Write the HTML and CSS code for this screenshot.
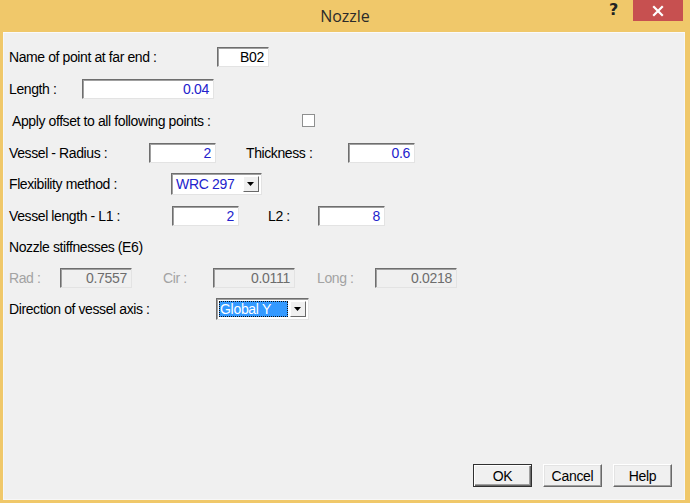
FILE: index.html
```html
<!DOCTYPE html>
<html>
<head>
<meta charset="utf-8">
<link rel="stylesheet" href="styles.css">
</head>
<body>
<div class="window">
  <div class="titlebar">
    <div class="title">Nozzle</div>
    <div class="help-q">?</div>
    <div class="close">
      <svg width="12" height="12" viewBox="0 0 12 12"><path d="M2 2 L10 10 M10 2 L2 10" stroke="#fff" stroke-width="2.2" stroke-linecap="square"/></svg>
    </div>
  </div>
  <div class="client">
    <div class="row r32">
      <span class="lbl" style="width:208px">Name of point at far end :</span>
      <span class="field black" style="width:52px">B02</span>
    </div>
    <div class="row r32">
      <span class="lbl" style="width:73px">Length :</span>
      <span class="field" style="width:132px">0.04</span>
    </div>
    <div class="row r32">
      <span class="lbl indent" style="width:293px">Apply offset to all following points :</span>
      <span class="check"></span>
    </div>
    <div class="row r31">
      <span class="lbl" style="width:140px">Vessel - Radius :</span>
      <span class="field" style="width:67px">2</span>
      <span class="lbl" style="width:102px;margin-left:30px">Thickness :</span>
      <span class="field" style="width:67px">0.6</span>
    </div>
    <div class="row r32">
      <span class="lbl" style="width:162px">Flexibility method :</span>
      <span class="combo" style="width:91px">
        <span class="combo-text blue">WRC 297</span>
        <span class="combo-btn"><svg width="8" height="5" viewBox="0 0 8 5"><path d="M0 0 H7 L3.5 4 Z" fill="#000"/></svg></span>
      </span>
    </div>
    <div class="row r31">
      <span class="lbl" style="width:163px">Vessel length - L1 :</span>
      <span class="field" style="width:67px">2</span>
      <span class="lbl" style="width:50px;margin-left:29px">L2 :</span>
      <span class="field" style="width:67px">8</span>
    </div>
    <div class="row r31">
      <span class="lbl">Nozzle stiffnesses (E6)</span>
    </div>
    <div class="row r31">
      <span class="lbl dis" style="width:51px">Rad :</span>
      <span class="field disf" style="width:72px">0.7557</span>
      <span class="lbl dis" style="width:50px;margin-left:31px">Cir :</span>
      <span class="field disf" style="width:82px">0.0111</span>
      <span class="lbl dis" style="width:58px;margin-left:22px">Long :</span>
      <span class="field disf" style="width:82px">0.0218</span>
    </div>
    <div class="row r32">
      <span class="lbl" style="width:207px">Direction of vessel axis :</span>
      <span class="combo" style="width:93px">
        <span class="combo-text sel"><span class="selbox">Global Y</span></span>
        <span class="combo-btn"><svg width="8" height="5" viewBox="0 0 8 5"><path d="M0 0 H7 L3.5 4 Z" fill="#000"/></svg></span>
      </span>
    </div>
    <div class="spacer"></div>
    <div class="buttons">
      <button class="btn default">OK</button>
      <button class="btn">Cancel</button>
      <button class="btn">Help</button>
    </div>
  </div>
</div>
</body>
</html>
```
FILE: styles.css
```css
html, body {
  margin: 0;
  padding: 0;
  width: 690px;
  height: 503px;
  overflow: hidden;
  background: #f0c86a;
}
.window {
  width: 690px;
  height: 503px;
  display: flex;
  flex-direction: column;
  background: #f0c86a;
  font-family: "Liberation Sans", Arial, sans-serif;
  font-size: 14px;
  color: #000;
}
.titlebar {
  height: 32px;
  position: relative;
  flex: none;
}
.title {
  text-align: center;
  font-family: "Open Sans", "Liberation Sans", sans-serif;
  font-size: 16px;
  color: #2b2b2b;
  line-height: 33px;
  padding-left: 0;
}
.help-q {
  position: absolute;
  left: 609px;
  top: 0;
  font-family: "DejaVu Sans", sans-serif;
  font-weight: bold;
  font-size: 16px;
  color: #222;
  line-height: 20px;
}
.close {
  position: absolute;
  left: 633px;
  top: 0;
  width: 50px;
  height: 21px;
  background: #c75050;
  display: flex;
  align-items: center;
  justify-content: center;
}
.client {
  flex: 1;
  margin: 0 5px 3px 3px;
  background: #f0f0f0;
  border: 1px solid #f7f7f7;
  border-top-color: #fafafa;
  display: flex;
  flex-direction: column;
  padding: 8px 0 12px 5px;
}
.row {
  display: flex;
  align-items: center;
  flex: none;
}
.r32 { height: 32px; }
.r31 { height: 31px; }
.lbl {
  flex: none;
  white-space: nowrap;
  letter-spacing: -0.4px;
}
.indent { padding-left: 3px; box-sizing: border-box; }
.dis { color: #a3a3a3; }
.field {
  flex: none;
  box-sizing: border-box;
  height: 20px;
  background: #fff;
  border: 1px solid;
  border-color: #6e6e6e #e3e3e3 #e3e3e3 #6e6e6e;
  box-shadow: inset 1px 1px 0 #a0a0a0;
  text-align: right;
  padding: 0 4px 0 0;
  line-height: 18px;
  color: #2222cc;
  letter-spacing: -0.3px;
}
.field.black { color: #000; }
.field.disf {
  background: #f0f0f0;
  color: #6d6d6d;
}
.check {
  flex: none;
  width: 13px;
  height: 13px;
  box-sizing: border-box;
  background: #fff;
  border: 1px solid #8e8f8f;
  margin-top: -1px;
}
.combo {
  flex: none;
  box-sizing: border-box;
  height: 22px;
  display: flex;
  background: #fff;
  border: 1px solid;
  border-color: #6e6e6e #e3e3e3 #e3e3e3 #6e6e6e;
  box-shadow: inset 1px 1px 0 #a0a0a0;
  padding: 2px 2px 2px 2px;
}
.combo-text {
  flex: 1;
  display: flex;
  align-items: center;
  padding-left: 2px;
  letter-spacing: -0.3px;
}
.blue { color: #2222cc; }
.combo-text.sel { padding-left: 0; }
.selbox {
  background: #3399ff;
  color: #fff;
  outline: 1px dotted #111;
  outline-offset: -1px;
  height: 16px;
  line-height: 16px;
  padding: 0 4px 0 1px;
  flex: 1;
  margin-right: 2px;
}
.combo-btn {
  flex: none;
  width: 16px;
  background: #f0f0f0;
  box-sizing: border-box;
  border: 1px solid;
  border-color: #fff #696969 #696969 #fff;
  display: flex;
  align-items: center;
  justify-content: center;
}
.spacer { flex: 1; }
.buttons {
  display: flex;
  justify-content: flex-end;
  gap: 11px;
  padding-right: 12px;
}
.btn {
  width: 59px;
  height: 23px;
  box-sizing: border-box;
  font-family: "Liberation Sans", Arial, sans-serif;
  font-size: 14px;
  letter-spacing: -0.3px;
  background: #f0f0f0;
  color: #000;
  border: 1px solid;
  border-color: #fff #696969 #696969 #fff;
  box-shadow: inset -1px -1px 0 #a0a0a0, inset 1px 1px 0 #e3e3e3;
  padding: 0;
}
.btn.default {
  border: 1px solid #303030;
  box-shadow: inset 1px 1px 0 #fff, inset -1px -1px 0 #696969, inset -2px -2px 0 #a0a0a0;
}
```
